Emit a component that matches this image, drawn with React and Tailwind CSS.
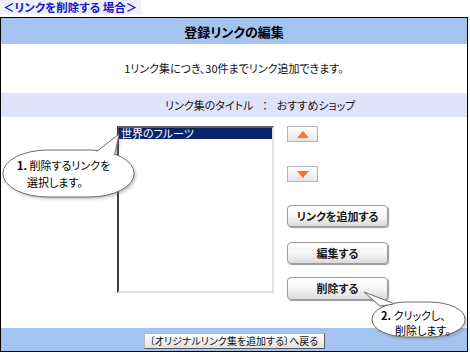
import React from "react";

const font = "font-['Noto_Sans_CJK_JP','Noto_Sans',sans-serif] [font-feature-settings:'palt']";

const ArrowButton = ({ up }) => (
  <div className="w-[31px] h-[16px] border border-[#b4b4b4] bg-gradient-to-b from-white to-[#e6e6e6] flex items-center justify-center">
    <svg width="12" height="7" viewBox="0 0 12 7">
      {up ? (
        <polygon points="6,0 12,7 0,7" fill="#f7752a" />
      ) : (
        <polygon points="0,0 12,0 6,7" fill="#f7752a" />
      )}
    </svg>
  </div>
);

const ActionButton = ({ label, className = "" }) => (
  <div
    className={`w-[101px] h-[22px] rounded-[4px] border border-[#9c9c9c] bg-gradient-to-b from-white via-[#f6f6f6] to-[#dcdcdc] shadow-[1px_1px_1px_#9a9a9a] flex items-center justify-center text-[11px] font-bold text-[#1a1a1a] ${className}`}
  >
    {label}
  </div>
);

const Bubbles = () => (
  <svg
    className="absolute left-0 top-0 pointer-events-none"
    width="470"
    height="357"
    viewBox="0 0 470 357"
  >
    <defs>
      <filter id="sh" x="-20%" y="-20%" width="140%" height="140%">
        <feGaussianBlur stdDeviation="1.5" />
      </filter>
    </defs>
    {/* bubble 1 */}
    <g filter="url(#sh)" opacity="0.45" transform="translate(2,2)">
      <rect x="3" y="150" width="131" height="47" rx="45" ry="23" fill="#777" />
      <polygon points="96,152 119,134 114,158" fill="#777" />
    </g>
    <rect x="3" y="150" width="131" height="47" rx="45" ry="23" fill="white" stroke="#6d6d6d" />
    <polygon points="96,152 119,134 114,158" fill="white" stroke="#6d6d6d" />
    <rect x="4" y="151" width="129" height="45" rx="44" ry="22" fill="white" />

    {/* bubble 2 */}
    <g filter="url(#sh)" opacity="0.45" transform="translate(2,2)">
      <rect x="372" y="302" width="93" height="35" rx="36" ry="17" fill="#777" />
      <polygon points="380,306 364,292 395,304" fill="#777" />
    </g>
    <rect x="372" y="302" width="93" height="35" rx="36" ry="17" fill="white" stroke="#6d6d6d" />
    <polygon points="380,306 364,292 395,304" fill="white" stroke="#6d6d6d" />
    <rect x="373" y="303" width="91" height="33" rx="35" ry="16" fill="white" />
  </svg>
);

const App = () => {
  return (
    <div className={`relative w-[470px] h-[357px] bg-white overflow-hidden leading-none ${font}`}>
      <div className="h-[14px] flex">
        <div className="h-[14px] leading-[14px] pl-[3px] pr-[4px] bg-[#eef0fc] text-[11.5px] font-bold text-[#1616c8] whitespace-nowrap">
          ＜リンクを削除する 場合＞
        </div>
      </div>

      <div className="mt-[3px] w-[468px] border border-black">
        <div className="h-[26px] bg-[#a4c3ee] flex items-center justify-center text-[13px] font-bold text-black">
          登録リンクの編集
        </div>

        <div className="h-[49px] flex items-center justify-center text-[11px] text-[#111]">
          1リンク集につき、30件までリンク追加できます。
        </div>

        <div className="h-[24px] bg-[#e0e4fb] flex items-center pl-[164px] text-[11px] text-[#111]">
          <span>リンク集のタイトル</span>
          <span className="mx-[9px]">：</span>
          <span>おすすめショップ</span>
        </div>

        <div className="h-[211px] flex pt-[9px] pl-[116px]">
          <div className="w-[157px] h-[167px] border-t-2 border-l-2 border-t-[#5a5a5a] border-l-[#404040] border-r-2 border-b-2 border-r-[#e2e0d8] border-b-[#e2e0d8] bg-white">
            <div className="h-[11px] bg-[#0a246a] text-white text-[11px] leading-[11px] pl-[2px] whitespace-nowrap">
              世界のフルーツ
            </div>
          </div>

          <div className="ml-[13px] flex flex-col">
            <ArrowButton up />
            <div className="mt-[24px]">
              <ArrowButton />
            </div>
            <ActionButton label="リンクを追加する" className="mt-[23px]" />
            <ActionButton label="編集する" className="mt-[15px]" />
            <ActionButton label="削除する" className="mt-[13px] h-[23px]" />
          </div>
        </div>

        <div className="h-[23px] bg-[#a4c3ee] flex justify-center pt-[5px]">
          <div className="w-[181px] h-[16px] border border-[#b8b8b8] border-r-[#5a5a5a] border-b-[#5a5a5a] bg-gradient-to-b from-white to-[#e2e2e2] flex items-center justify-center text-[10px] whitespace-nowrap text-[#111]">
            〔オリジナルリンク集を追加する〕へ戻る
          </div>
        </div>
      </div>

      <Bubbles />

      <div className="absolute left-[17px] top-[157px] text-[11px] leading-[17px] text-black whitespace-nowrap">
        <div>
          <span className="font-bold">1.</span> 削除するリンクを
        </div>
        <div className="pl-[10px]">選択します。</div>
      </div>

      <div className="absolute left-[381px] top-[308px] text-[11px] leading-[15px] text-black whitespace-nowrap">
        <div>
          <span className="font-bold">2.</span> クリックし、
        </div>
        <div className="pl-[14px]">削除します。</div>
      </div>
    </div>
  );
};

export default App;
